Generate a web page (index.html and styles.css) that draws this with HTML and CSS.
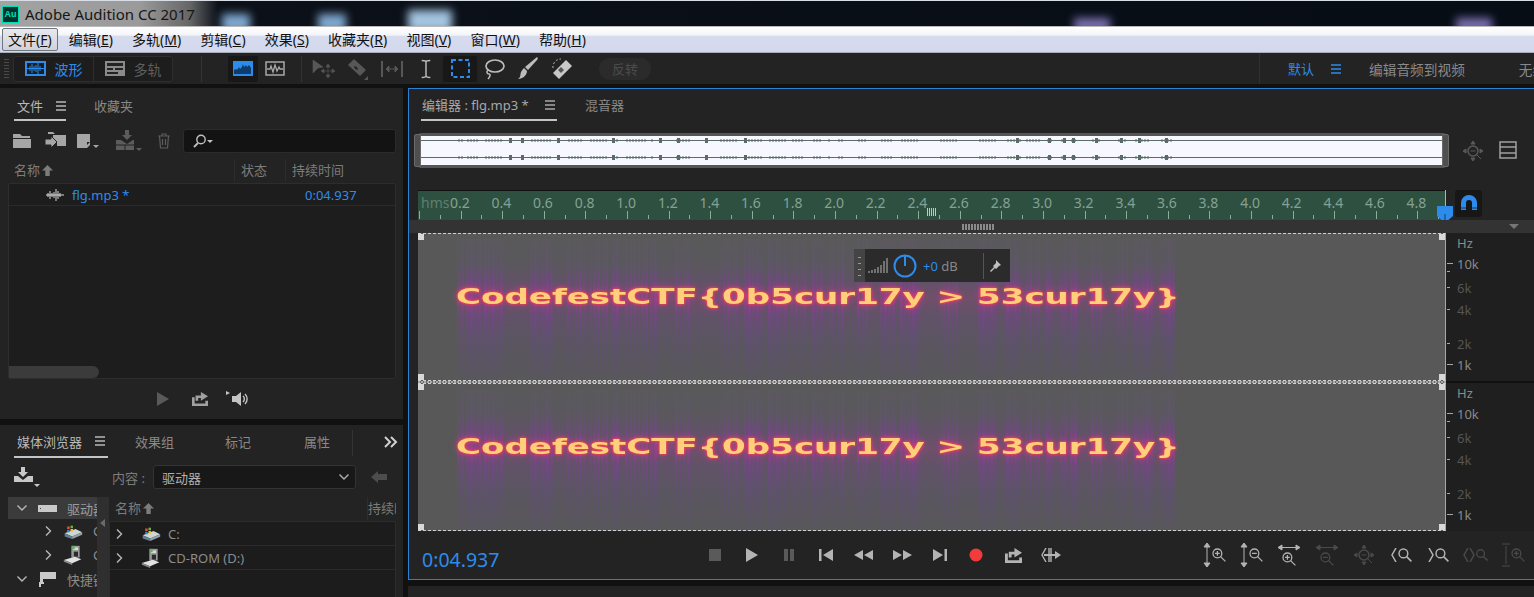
FILE: index.html
```html
<!DOCTYPE html>
<html lang="zh-CN">

<head>
    <meta charset="UTF-8">
    <title>Adobe Audition CC 2017</title>
    <link rel="stylesheet" href="styles.css">
</head>

<body>
    <svg class="defs" width="0" height="0">
        <symbol id="i-menu" viewBox="0 0 12 10"><path d="M1 1h10M1 5h10M1 9h10" stroke="currentColor" stroke-width="1.3" fill="none"/></symbol>
        <symbol id="i-right" viewBox="0 0 10 12"><path d="M3 1.500 7.500 6 3 10.500" stroke="currentColor" stroke-width="1.4" fill="none"/></symbol>
        <symbol id="i-down" viewBox="0 0 12 10"><path d="M1.500 2.500 6 7l4.500-4.500" stroke="currentColor" stroke-width="1.4" fill="none"/></symbol>
        <symbol id="i-sort" viewBox="0 0 10 10"><path d="M5 0 10 5H7v5H3V5H0z" fill="currentColor"/></symbol>
        <symbol id="i-loop" viewBox="0 0 20 18"><path d="M1 7h3v7h12v-3h3v6H1z" fill="currentColor"/><path d="M5 11V5h6V1l8 5-8 5V8H8v3z" fill="currentColor"/></symbol>
        <symbol id="i-drive" viewBox="0 0 24 20"><path d="M2 12 15 7l8 4-12 5z" fill="#cfd6cf"/><path d="M2 12l9 4v3l-9-3z" fill="#5d7f93"/><path d="M11 16l12-5v3l-12 5z" fill="#8fa2ad"/><path d="M5 4h3v3H5z" fill="#e0552f"/><path d="M9 3h3v3H9z" fill="#63b446"/><path d="M5 8h3v3H5z" fill="#3d86d8"/><path d="M9 7h3v3H9z" fill="#eebd33"/></symbol>
        <symbol id="i-cd" viewBox="0 0 24 24"><path d="M10 1h10v14H10z" fill="#9a9a9a"/><path d="M12 3h6v3h-6z" fill="#d8d8d8"/><path d="M11 1h3v4h-3z" fill="#5fb05f"/><path d="M13 8h5v6h-5z" fill="#2b2b2b"/><path d="M1 18l13-4 8 3-11 5z" fill="#e2e2e2"/><path d="M1 18l10 4v2L1 20z" fill="#8b8b8b"/></symbol>
        <symbol id="i-plus" viewBox="0 0 20 20"><circle cx="8" cy="8" r="5.500" stroke="currentColor" stroke-width="1.600" fill="none"/><path d="M12 12l6 6M5 8h6M8 5v6" stroke="currentColor" stroke-width="1.600" fill="none"/></symbol>
        <symbol id="i-minus" viewBox="0 0 20 20"><circle cx="8" cy="8" r="5.500" stroke="currentColor" stroke-width="1.600" fill="none"/><path d="M12 12l6 6M5 8h6" stroke="currentColor" stroke-width="1.600" fill="none"/></symbol>
        <symbol id="i-glass" viewBox="0 0 20 20"><circle cx="8" cy="8" r="5.500" stroke="currentColor" stroke-width="1.800" fill="none"/><path d="M12 12l6 6" stroke="currentColor" stroke-width="2" fill="none"/></symbol>
    </svg>

    <div class="app">
        <header class="titlebar">
            <span class="logo">Au</span>
            <span class="title">Adobe Audition CC 2017</span>
            <i class="blur-icon b1"></i>
            <i class="blur-icon b2"></i>
            <i class="blur-icon b3"></i>
            <i class="blur-icon b4"></i>
            <i class="blur-icon b5"></i>
        </header>

        <nav class="menubar">
            <a class="menu-item active">文件(<u>F</u>)</a>
            <a class="menu-item">编辑(<u>E</u>)</a>
            <a class="menu-item">多轨(<u>M</u>)</a>
            <a class="menu-item">剪辑(<u>C</u>)</a>
            <a class="menu-item">效果(<u>S</u>)</a>
            <a class="menu-item">收藏夹(<u>R</u>)</a>
            <a class="menu-item">视图(<u>V</u>)</a>
            <a class="menu-item">窗口(<u>W</u>)</a>
            <a class="menu-item">帮助(<u>H</u>)</a>
        </nav>

        <div class="toolbar">
            <span class="grip"></span>
            <div class="mode-group">
                <button class="mode on">
                    <svg width="21" height="15" viewBox="0 0 21 15"><path d="M1 1h19v13H1z" fill="none" stroke="currentColor" stroke-width="2"/><path d="M2 7.500h17M5 5v5M7 3v9M9 5v5M11 4v7M13 2v11M15 5v5" stroke="currentColor" fill="none"/></svg>
                    波形
                </button>
                <button class="mode">
                    <svg width="20" height="15" viewBox="0 0 20 15"><path d="M0 0h20v15H0z" fill="#8a8a8a"/><path d="M2 2h16v3H2zM2 7h6v2H2zM10 7h8v2h-8zM2 11h11v2H2z" fill="#232323"/></svg>
                    多轨
                </button>
            </div>
            <span class="tb-sep first"></span>
            <div class="view-group">
                <button class="view on">
                    <svg width="20" height="15" viewBox="0 0 20 15"><path d="M0 0h20v15H0z" fill="#2d8ceb"/><path d="M1 13V9l2-1 1 1 2-3 1 2 2-2 1-3 1 3 2-2 1 2 2-2 2 3v6z" fill="#0e3c6c"/></svg>
                </button>
                <button class="view">
                    <svg width="20" height="15" viewBox="0 0 20 15"><path d="M1 1h18v13H1z" fill="none" stroke="#a8a8a8" stroke-width="1.500"/><path d="M2 8h3l1-3 2 6 2-7 2 6 2-4 1 2h3" fill="none" stroke="#a8a8a8" stroke-width="1.300"/></svg>
                </button>
            </div>
            <span class="tb-sep second"></span>
            <div class="tools">
                <button class="tool off"><svg width="24" height="20" viewBox="0 0 24 20"><path d="M1 1l10 7-5 1-5 5zM16 7v10M11 12h10M16 5l-2 3h4zM16 19l-2-3h4zM9 12l3-2v4zM23 12l-3-2v4z" fill="currentColor" stroke="currentColor" stroke-width=".6"/></svg></button>
                <button class="tool off"><svg width="22" height="22" viewBox="0 0 22 22"><path d="M7 1l12 11-6 6L1 7z" fill="currentColor"/><path d="M7 8l3 1 1 3-3-1z" fill="#232323"/><path d="M21 18v4h-4z" fill="currentColor"/></svg></button>
                <button class="tool off"><svg width="24" height="18" viewBox="0 0 24 18"><path d="M2 1v16M22 1v16" stroke="currentColor" stroke-width="2"/><path d="M6 9h12M6 9l3-3v6zM18 9l-3-3v6z" stroke="currentColor" fill="currentColor"/></svg></button>
                <button class="tool"><svg width="12" height="20" viewBox="0 0 14 22"><path d="M2 1c3 0 5 1 5 2 0-1 2-2 5-2M7 3v16M2 21c3 0 5-1 5-2 0 1 2 2 5 2" fill="none" stroke="currentColor" stroke-width="1.700"/></svg></button>
                <button class="tool selected"><svg width="19" height="19" viewBox="0 0 19 19"><path d="M1 1h17v17H1z" fill="none" stroke="#2d8ceb" stroke-width="2" stroke-dasharray="4 2.500"/></svg></button>
                <button class="tool"><svg width="22" height="22" viewBox="0 0 22 22"><ellipse cx="12" cy="8" rx="9" ry="6" fill="none" stroke="currentColor" stroke-width="1.700"/><path d="M5 12c-2 2-1 4 1 4s1 3-1 5" fill="none" stroke="currentColor" stroke-width="1.500"/></svg></button>
                <button class="tool"><svg width="22" height="23" viewBox="0 0 22 23"><path d="M20 0c1 1 1 2 0 3l-9 10-3-3z" fill="currentColor"/><path d="M7 11l3 3c0 4-4 8-9 8 3-2 2-4 3-7 1-2 2-3 3-4z" fill="currentColor"/></svg></button>
                <button class="tool"><svg width="24" height="23" viewBox="0 0 24 23"><path d="M16 3l6 6L9 22l-6-6z" fill="#c8c8c8"/><path d="M11 10l3 3-3 3-3-3z" fill="#555"/><path d="M3 11A8 8 0 0 1 11 2" fill="none" stroke="#bbb" stroke-dasharray="2 2"/></svg></button>
            </div>
            <button class="pill">反转</button>
            <div class="workspaces">
                <span class="ws on">默认</span>
                <svg class="ws-menu" width="12" height="10"><use href="#i-menu"/></svg>
                <span class="ws edit">编辑音频到视频</span>
                <span class="ws none">无线电作品</span>
            </div>
        </div>

        <div class="workspace">
            <aside class="left">
                <section class="panel files">
                    <div class="tabs">
                        <div class="tab on">文件<svg width="12" height="10"><use href="#i-menu"/></svg></div>
                        <div class="tab fav">收藏夹</div>
                    </div>
                    <div class="file-tools">
                        <svg width="20" height="16" viewBox="0 0 20 16"><path d="M1 1h7l2 2h8v2H1zM1 6h18v9H1z" fill="#a6a6a6"/></svg>
                        <svg width="22" height="18" viewBox="0 0 22 18"><path d="M3 0h5l2 2H3zM8 3h13v11H12V9H8z" fill="#a6a6a6"/><path d="M0 7h6V4l6 6-6 6v-3H0z" fill="#a6a6a6" stroke="#232323"/></svg>
                        <svg width="24" height="18" viewBox="0 0 24 18"><path d="M1 2h13v11l-3 3H1z" fill="#a6a6a6"/><path d="M11 10h3l-3 3z" fill="#232323"/><path d="M17 13h6l-3 3z" fill="#a6a6a6"/></svg>
                        <svg class="dim" width="27" height="22" viewBox="0 0 27 22"><path d="M10 0h4v5h3l-5 5-5-5h3z" fill="#5c5c5c"/><path d="M1 10h5l6 4 6-4h1v10H1z" fill="#5c5c5c"/><path d="M1 15h18M10 15v5" stroke="#232323"/><path d="M21 18h6l-3 3z" fill="#5c5c5c"/></svg>
                        <svg class="dim trash" width="14" height="16" viewBox="0 0 14 16"><path d="M1 3h12M5 3V1h4v2M2.500 3l1 12h7l1-12M5.500 6v6M8.500 6v6" fill="none" stroke="#5c5c5c" stroke-width="1.200"/></svg>
                        <div class="search">
                            <svg width="22" height="14" viewBox="0 0 22 14"><circle cx="9" cy="5.500" r="4.200" fill="none" stroke="#c0c0c0" stroke-width="1.400"/><path d="M6 9l-4 4" stroke="#c0c0c0" stroke-width="1.800"/><path d="M15 6h6l-3 3z" fill="#c0c0c0"/></svg>
                        </div>
                    </div>
                    <div class="col-head">
                        <span class="c-name">名称<svg width="11" height="11"><use href="#i-sort"/></svg></span>
                        <span class="c-state">状态</span>
                        <span class="c-time">持续时间</span>
                    </div>
                    <div class="file-list">
                        <div class="file-row">
                            <svg width="18" height="12" viewBox="0 0 18 12"><path d="M0 6h18M2 4v4M4 2v8M6 4v4M8 3v6M10 0v12M12 2v8M14 4v4" stroke="#d8d8d8" fill="none"/></svg>
                            <span class="file-name">flg.mp3 *</span>
                            <span class="file-time">0:04.937</span>
                        </div>
                        <div class="scroll"><div class="thumb"></div></div>
                    </div>
                    <div class="file-foot">
                        <svg class="dim" width="12" height="14" viewBox="0 0 12 14"><path d="M0 0l12 7-12 7z" fill="#5a5a5a"/></svg>
                        <svg width="18" height="16"><use href="#i-loop"/></svg>
                        <svg class="speaker" width="26" height="18" viewBox="0 0 26 18"><path d="M1 1l4 2-4 2zM7 6h4l5-4v14l-5-4H7z" fill="#c4c4c4"/><path d="M18 6a4 4 0 0 1 0 6M20 4a7 7 0 0 1 0 10" fill="none" stroke="#c4c4c4" stroke-width="1.400"/></svg>
                    </div>
                </section>

                <section class="panel media">
                    <div class="tabs media-tabs">
                        <div class="tab on">媒体浏览器<svg width="12" height="10"><use href="#i-menu"/></svg></div>
                        <div class="tab t-group">效果组</div>
                        <div class="tab t-mark">标记</div>
                        <div class="tab t-prop">属性</div>
                        <span class="tab-sep"></span>
                        <svg class="more" width="14" height="12" viewBox="0 0 14 12"><path d="M1 1l5 5-5 5M7 1l5 5-5 5" fill="none" stroke="#d0d0d0" stroke-width="2"/></svg>
                    </div>
                    <div class="media-bar">
                        <svg class="import" width="27" height="20" viewBox="0 0 27 20"><path d="M8 0h4v5h3l-5 5-5-5h3z" fill="#c8c8c8"/><path d="M1 9h4l5 4 5-4h5v6H1z" fill="#c8c8c8"/><path d="M21 17h6l-3 3z" fill="#c8c8c8"/></svg>
                        <label class="content-label">内容 :</label>
                        <div class="select">驱动器<svg width="12" height="10"><use href="#i-down"/></svg></div>
                        <svg class="back" width="16" height="12" viewBox="0 0 16 12"><path d="M0 6l7-6v3h9v6H7v3z" fill="#4d4d4d"/></svg>
                    </div>
                    <div class="browser">
                        <div class="tree">
                            <div class="tree-row sel"><svg class="chev" width="12" height="10"><use href="#i-down"/></svg><svg width="19" height="9" viewBox="0 0 19 9"><path d="M0 1h19v7H0z" fill="#c9c9c9"/><path d="M2 4h1v1H2z" fill="#444"/></svg><span>驱动器</span></div>
                            <div class="tree-row sub"><svg class="chev" width="10" height="12"><use href="#i-right"/></svg><svg width="20" height="17"><use href="#i-drive"/></svg><span>C:</span></div>
                            <div class="tree-row sub"><svg class="chev" width="10" height="12"><use href="#i-right"/></svg><svg width="20" height="20"><use href="#i-cd"/></svg><span>CD-ROM (D:)</span></div>
                            <div class="tree-row"><svg class="chev" width="12" height="10"><use href="#i-down"/></svg><svg width="19" height="16" viewBox="0 0 19 16"><path d="M2 1h16v7H5v3H2z" fill="#c9c9c9"/><path d="M1 11h5v2H3v3H1z" fill="#c9c9c9"/></svg><span>快捷键</span></div>
                        </div>
                        <div class="splitter"><i></i></div>
                        <div class="listing">
                            <div class="col-head listing-head">
                                <span class="c-name">名称<svg width="11" height="11"><use href="#i-sort"/></svg></span>
                                <span class="c-last">持续时间</span>
                            </div>
                            <div class="listing-box">
                                <div class="list-row"><svg class="chev" width="10" height="12"><use href="#i-right"/></svg><svg width="20" height="17"><use href="#i-drive"/></svg><span>C:</span></div>
                                <div class="list-row"><svg class="chev" width="10" height="12"><use href="#i-right"/></svg><svg width="20" height="20"><use href="#i-cd"/></svg><span>CD-ROM (D:)</span></div>
                            </div>
                        </div>
                    </div>
                </section>
            </aside>

            <div class="right">
                <main class="editor">
                    <div class="tabs editor-tabs">
                        <div class="tab on">编辑器 : flg.mp3 *<svg width="12" height="10"><use href="#i-menu"/></svg></div>
                        <div class="tab mixer">混音器</div>
                    </div>

                    <div class="overview-row">
                        <div class="overview"><svg id="overview" width="1022" height="30"></svg></div>
                        <i class="ov-grip l"></i>
                        <i class="ov-grip r"></i>
                        <svg class="ov-zoom" width="22" height="22" viewBox="0 0 22 22"><circle cx="11" cy="11" r="5" fill="none" stroke="#5a5a5a" stroke-width="1.500"/><path d="M14 14l5 5M8.500 11h5M11 1l-2 3h4zM1 11l3-2v4zM21 11l-3-2v4zM11 21l-2-3h4z" stroke="#5a5a5a" fill="#5a5a5a"/></svg>
                        <svg class="ov-list" width="18" height="18" viewBox="0 0 18 18"><path d="M1 1h16v16H1zM1 6h16M1 12h16" fill="none" stroke="#a0a0a0" stroke-width="1.500"/></svg>
                    </div>

                    <div class="ruler-row">
                        <div class="ruler">
                            <span class="hms">hms</span>
                            <span>0.2</span><span>0.4</span><span>0.6</span><span>0.8</span><span>1.0</span><span>1.2</span>
                            <span>1.4</span><span>1.6</span><span>1.8</span><span>2.0</span><span>2.2</span><span>2.4</span>
                            <span>2.6</span><span>2.8</span><span>3.0</span><span>3.2</span><span>3.4</span><span>3.6</span>
                            <span>3.8</span><span>4.0</span><span>4.2</span><span>4.4</span><span>4.6</span><span>4.8</span>
                            <i class="ruler-grip"></i>
                            <svg class="playhead" width="16" height="16" viewBox="0 0 16 16"><path d="M0 0h16v10l-7 6h-2l-7-6z" fill="#2d8ceb"/><path d="M8 8v8" stroke="#0d3f70"/></svg>
                        </div>
                        <button class="snap">
                            <svg width="18" height="18" viewBox="0 0 18 18"><path d="M1 15V8a8 8 0 0 1 16 0v7h-5V8a3 3 0 0 0-6 0v7z" fill="#2d8ceb"/><path d="M1 13h5M12 13h5" stroke="#0c3a66" stroke-width="1.200"/></svg>
                        </button>
                    </div>

                    <div class="hscroll"><i class="hs-grip"></i><i class="hs-arrow"></i></div>

                    <div class="channels">
                        <div class="channel">
                            <div class="spec" data-spec>
                                <div class="flag">CodefestCTF{0b5cur17y &gt; 53cur17y}</div>
                                <i class="handle tl"></i><i class="handle tr"></i><i class="handle bl"></i><i class="handle br"></i>
                            </div>
                            <div class="freq">
                                <span class="f hz">Hz</span><span class="f k10">10k</span><span class="f k6 low">6k</span><span class="f k4 low">4k</span><span class="f k2 low">2k</span><span class="f k1">1k</span><span class="f k0">100</span>
                                <i class="t t1"></i><i class="t t2"></i><i class="t t3"></i><i class="t t4"></i><i class="t t5"></i><i class="t t6"></i>
                            </div>
                        </div>
                        <div class="divider"></div>
                        <div class="channel">
                            <div class="spec" data-spec>
                                <div class="flag">CodefestCTF{0b5cur17y &gt; 53cur17y}</div>
                                <i class="handle tl"></i><i class="handle tr"></i><i class="handle bl"></i><i class="handle br"></i>
                            </div>
                            <div class="freq">
                                <span class="f hz">Hz</span><span class="f k10">10k</span><span class="f k6 low">6k</span><span class="f k4 low">4k</span><span class="f k2 low">2k</span><span class="f k1">1k</span><span class="f k0">100</span>
                                <i class="t t1"></i><i class="t t2"></i><i class="t t3"></i><i class="t t4"></i><i class="t t5"></i><i class="t t6"></i>
                            </div>
                        </div>
                        <div class="hud">
                            <span class="hud-grip"></span>
                            <svg width="20" height="16" viewBox="0 0 20 16"><path d="M1 15v-2M4 15v-3M7 15v-4M10 15v-6M13 15v-8M16 15V3M19 15V0" stroke="#a0a0a0" fill="none" stroke-width="1.200"/></svg>
                            <svg width="24" height="24" viewBox="0 0 24 24"><circle cx="12" cy="12" r="10.500" fill="none" stroke="#2d8ceb" stroke-width="2"/><path d="M12 1v11" stroke="#2d8ceb" stroke-width="2"/></svg>
                            <span class="hud-db"><b>+0</b> dB</span>
                            <span class="hud-sep"></span>
                            <svg width="12" height="12" viewBox="0 0 12 12"><path d="M7 0l5 5-2 1-3 3-1-1-4 4-1-1 4-4-1-1 3-3z" fill="#c0c0c0"/></svg>
                        </div>
                    </div>

                    <div class="transport">
                        <div class="clock">0:04.937</div>
                        <div class="transport-btns">
                            <svg width="12" height="12" viewBox="0 0 12 12"><path d="M0 0h12v12H0z" fill="#5a5a5a"/></svg>
                            <svg width="14" height="14" viewBox="0 0 14 14"><path d="M1 0l12 7-12 7z" fill="#b4b4b4"/></svg>
                            <svg width="12" height="12" viewBox="0 0 12 12"><path d="M1 0h4v12H1zM7 0h4v12H7z" fill="#5a5a5a"/></svg>
                            <svg width="15" height="12" viewBox="0 0 15 12"><path d="M0 0h2.500v12H0zM14 0v12L4 6z" fill="#b4b4b4"/></svg>
                            <svg width="20" height="10" viewBox="0 0 20 10"><path d="M9 0v10L0 5zM19 0v10l-9-5z" fill="#b4b4b4"/></svg>
                            <svg width="20" height="10" viewBox="0 0 20 10"><path d="M1 0v10l9-5zM11 0v10l9-5z" fill="#b4b4b4"/></svg>
                            <svg width="15" height="12" viewBox="0 0 15 12"><path d="M1 0v12l10-6zM12.500 0H15v12h-2.500z" fill="#b4b4b4"/></svg>
                            <svg width="14" height="14" viewBox="0 0 14 14"><circle cx="7" cy="7" r="6.500" fill="#f23b3b"/></svg>
                            <svg class="t-loop" width="19" height="17"><use href="#i-loop"/></svg>
                            <svg width="20" height="14" viewBox="0 0 20 14"><path d="M5 0 1 7l4 7M8 0v14M10 0v14" fill="none" stroke="#b4b4b4" stroke-width="1.400"/><path d="M3 6h11V3l6 4-6 4V8H3z" fill="#b4b4b4"/></svg>
                        </div>
                        <div class="zoom-btns">
                            <span class="zb"><svg width="8" height="24" viewBox="0 0 8 24"><path d="M4 3v18M4 0 1 4h6zM4 24l-3-4h6z" stroke="currentColor" fill="currentColor"/></svg><svg width="16" height="16"><use href="#i-plus"/></svg></span>
                            <span class="zb"><svg width="8" height="24" viewBox="0 0 8 24"><path d="M4 3v18M4 0 1 4h6zM4 24l-3-4h6z" stroke="currentColor" fill="currentColor"/></svg><svg width="16" height="16"><use href="#i-minus"/></svg></span>
                            <span class="zb col"><svg width="22" height="7" viewBox="0 0 22 7"><path d="M3 3.500h16M0 3.500 4 1v5zM22 3.500 18 1v5z" stroke="currentColor" fill="currentColor"/></svg><svg width="16" height="16"><use href="#i-plus"/></svg></span>
                            <span class="zb col dim"><svg width="22" height="7" viewBox="0 0 22 7"><path d="M3 3.500h16M0 3.500 4 1v5zM22 3.500 18 1v5z" stroke="currentColor" fill="currentColor"/></svg><svg width="16" height="16"><use href="#i-minus"/></svg></span>
                            <span class="zb dim"><svg width="22" height="22" viewBox="0 0 22 22"><circle cx="11" cy="11" r="5" fill="none" stroke="currentColor" stroke-width="1.500"/><path d="M14 14l5 5M8.500 11h5M11 1l-2 3h4zM1 11l3-2v4zM21 11l-3-2v4zM11 21l-2-3h4z" stroke="currentColor" fill="currentColor"/></svg></span>
                            <span class="zb"><svg width="6" height="14" viewBox="0 0 6 14"><path d="M5 0 1 7l4 7" fill="none" stroke="currentColor" stroke-width="1.500"/></svg><svg width="16" height="16"><use href="#i-glass"/></svg></span>
                            <span class="zb"><svg width="6" height="14" viewBox="0 0 6 14"><path d="M1 0l4 7-4 7" fill="none" stroke="currentColor" stroke-width="1.500"/></svg><svg width="16" height="16"><use href="#i-glass"/></svg></span>
                            <span class="zb dim"><svg width="12" height="14" viewBox="0 0 12 14"><path d="M5 0 1 7l4 7M7 0l4 7-4 7" fill="none" stroke="currentColor" stroke-width="1.500"/></svg><svg width="14" height="14"><use href="#i-glass"/></svg></span>
                            <span class="zb dim"><svg width="8" height="24" viewBox="0 0 8 24"><path d="M4 3v18M0 1h8M0 23h8" stroke="currentColor" fill="none"/></svg><svg width="16" height="16"><use href="#i-plus"/></svg></span>
                        </div>
                    </div>
                </main>
                <div class="status"></div>
            </div>
        </div>
    </div>

    <script src="script.js"></script>
</body>

</html>
```

FILE: styles.css
```css
* {
    box-sizing: border-box;
}

html, body {
    margin: 0;
    height: 100%;
    overflow: hidden;
    background-color: #111;
}

body {
    font-family: "Noto Sans", "Noto Sans CJK SC", sans-serif;
    font-size: 13px;
    color: #a0a0a0;
}

button {
    font: inherit;
    color: inherit;
    background: none;
    border: none;
    padding: 0;
}

svg {
    display: block;
    flex: none;
}

.defs {
    position: absolute;
}

.app {
    width: 1534px;
    height: 597px;
    display: flex;
    flex-direction: column;
    overflow: hidden;
}

/* barra de titulo */
.titlebar {
    position: relative;
    flex: none;
    height: 27px;
    display: flex;
    align-items: center;
    padding: 1px 0 0 2px;
    background: linear-gradient(90deg, #a3a3a3 0, #9a9a9a 140px, #666 190px, #0c1119 218px, #070d15 100%);
    border-top: 1px solid #d8dde6;
    border-bottom: 1px solid #b9b9b9;
    overflow: hidden;
}

.logo {
    width: 17px;
    height: 17px;
    border: 1px solid #00dcb4;
    background-color: #00332d;
    color: #00e0b8;
    font: bold 9px "Liberation Sans", sans-serif;
    line-height: 15px;
    text-align: center;
}

.title {
    margin-left: 6px;
    font-size: 15px;
    color: #161616;
}

.blur-icon {
    position: absolute;
    bottom: -6px;
    width: 28px;
    height: 18px;
    background-color: #7fa8cf;
    filter: blur(4px);
}

.b1 { left: 222px; }
.b2 { left: 318px; }
.b3 { left: 408px; width: 44px; background-color: #a3c3e0; height: 22px; }
.b4 { left: 1074px; width: 36px; background-color: #7a6fb0; height: 14px; }
.b5 { left: 1456px; width: 36px; background-color: #7a6fb0; height: 14px; }

/* menu */
.menubar {
    flex: none;
    height: 26px;
    display: flex;
    align-items: center;
    padding: 0 2px;
    background: linear-gradient(#fff 0, #f4f5f9 32%, #d6dbee 38%, #d3d8ec 100%);
    border-bottom: 1px solid #a9aebb;
}

.menu-item {
    padding: 0 7px;
    margin-right: 3.200px;
    height: 23px;
    line-height: 22px;
    font-size: 14px;
    color: #111;
    white-space: nowrap;
    border: 1px solid transparent;
}

.menu-item.active {
    padding: 0 5px;
    border: 1px solid #6e7680;
    border-radius: 2px;
    background: linear-gradient(#e8e9ee, #d0d2da);
    margin-right: 3px;
}

/* barra de ferramentas */
.toolbar {
    flex: none;
    height: 31px;
    display: flex;
    align-items: center;
    background-color: #232323;
}

.grip {
    width: 5px;
    height: 20px;
    margin-left: 4px;
    background: repeating-linear-gradient(#4a4a4a 0 1px, transparent 1px 3px);
}

.mode-group {
    display: flex;
    margin-left: 4px;
    height: 26px;
    border: 1px solid #2e2e2e;
    border-radius: 3px;
    background-color: #1d1d1d;
}

.mode {
    width: 79px;
    display: flex;
    align-items: center;
    justify-content: center;
    gap: 9px;
    color: #5e5e5e;
    border-left: 1px solid #2e2e2e;
    font-size: 14px;
}

.mode.on {
    color: #2d8ceb;
    border-left: none;
}

.tb-sep {
    width: 1px;
    height: 26px;
    background-color: #333;
}

.tb-sep.first {
    margin: 0 26px 0 28px;
}

.tb-sep.second {
    margin: 0 5px 0 11px;
}

.view-group {
    display: flex;
    gap: 2px;
}

.view {
    width: 30px;
    height: 26px;
    display: flex;
    align-items: center;
    justify-content: center;
    border-radius: 2px;
}

.view.on {
    background-color: #181818;
}

.tools {
    display: flex;
}

.tool {
    width: 34px;
    height: 26px;
    display: flex;
    align-items: center;
    justify-content: center;
    color: #bcbcbc;
    border-radius: 2px;
}

.tool.off {
    color: #575757;
}

.tool.selected {
    background-color: #181818;
}

.pill {
    margin-left: 20px;
    width: 52px;
    height: 22px;
    border-radius: 11px;
    background-color: #2b2b2b;
    color: #4c4c4c;
    font-size: 13px;
}

.workspaces {
    margin-left: auto;
    width: 275px;
    height: 31px;
    display: flex;
    align-items: center;
    border-left: 1px solid #303030;
    font-size: 13px;
    overflow: hidden;
    white-space: nowrap;
}

.ws.on {
    margin-left: 28px;
    color: #2d8ceb;
}

.ws-menu {
    margin-left: 16px;
    color: #2d8ceb;
}

.ws.edit {
    margin-left: 27px;
    font-size: 13.700px;
    color: #8a8a8a;
}

.ws.none {
    margin-left: 54px;
    font-size: 13.700px;
    color: #8a8a8a;
}

/* paineis */
.workspace {
    flex: 1;
    min-height: 0;
    display: flex;
    padding-top: 4px;
    background-color: #111;
}

.left {
    width: 403px;
    flex: none;
    display: flex;
    flex-direction: column;
    gap: 6px;
}

.panel {
    background-color: #232323;
}

.files {
    height: 331px;
    padding-left: 8px;
    padding-right: 7px;
    position: relative;
}

.media {
    flex: 1;
    min-height: 0;
    padding-left: 8px;
    overflow: hidden;
}

.tabs {
    display: flex;
    align-items: flex-start;
    font-size: 13px;
    color: #888;
}

.tab {
    white-space: nowrap;
}

.tab.on {
    display: flex;
    align-items: center;
    gap: 12px;
    color: #b8b8b8;
    border-bottom: 2px solid #c4c4c4;
}

.files .tabs {
    height: 34px;
    padding: 7px 0 0 6px;
}

.files .tab.on {
    width: 52px;
    height: 26px;
    padding-left: 3px;
    padding-bottom: 3px;
}

.fav {
    margin-left: 28px;
    line-height: 23px;
}

.file-tools {
    height: 37px;
    display: flex;
    align-items: center;
    padding-left: 4px;
    color: #a6a6a6;
}

.file-tools svg:nth-child(2) {
    margin-left: 13px;
}

.file-tools svg:nth-child(3) {
    margin-left: 9px;
}

.file-tools svg:nth-child(4) {
    margin-left: 15px;
}

.file-tools .trash {
    margin-left: 15px;
}

.search {
    margin-left: 12px;
    width: 213px;
    height: 24px;
    display: flex;
    align-items: center;
    padding-left: 8px;
    background-color: #131313;
    border: 1px solid #2b2b2b;
    border-radius: 3px;
}

.col-head {
    position: relative;
    height: 24px;
    line-height: 23px;
    font-size: 13px;
    color: #7c7c7c;
}

.col-head span {
    position: absolute;
    top: 0;
}

.c-name {
    left: 6px;
    display: flex;
    align-items: center;
    gap: 2px;
}

.c-state {
    left: 226px;
    padding-left: 6px;
    border-left: 1px solid #2c2c2c;
}

.c-time {
    left: 277px;
    padding-left: 6px;
    border-left: 1px solid #2c2c2c;
}

.file-list {
    position: relative;
    width: 388px;
    height: 196px;
    background-color: #1d1d1d;
    border: 1px solid #2d2d2d;
    border-radius: 2px;
    overflow: hidden;
}

.file-row {
    position: relative;
    height: 22px;
    display: flex;
    align-items: center;
    padding-left: 37px;
    border-bottom: 1px solid #2a2a2a;
}

.file-name {
    margin-left: 8px;
    color: #2d8ceb;
}

.file-time {
    position: absolute;
    left: 296px;
    color: #2d8ceb;
}

.scroll {
    position: absolute;
    left: 0;
    right: 0;
    bottom: 0;
    height: 12px;
}

.thumb {
    width: 90px;
    height: 100%;
    border-radius: 0 6px 6px 0;
    background-color: #3b3b3b;
}

.file-foot {
    display: flex;
    align-items: center;
    padding: 11px 0 0 149px;
    gap: 22px;
}

.speaker {
    margin-left: -6px;
}

.media-tabs {
    position: relative;
    height: 33px;
    padding: 7px 0 0 6px;
}

.media-tabs .tab.on {
    width: 94px;
    height: 26px;
    padding-left: 3px;
    gap: 12px;
    align-items: flex-start;
}

.media-tabs .tab.on svg {
    margin-top: 4px;
}

.t-group {
    margin-left: 27px;
}

.t-mark {
    margin-left: 51px;
}

.t-prop {
    margin-left: 53px;
}

.tab-sep {
    position: absolute;
    left: 344px;
    top: 5px;
    width: 1px;
    height: 26px;
    background-color: #333;
}

.more {
    position: absolute;
    left: 376px;
    top: 11px;
}

.media-bar {
    height: 33px;
    display: flex;
    align-items: center;
    padding-top: 5px;
}

.import {
    margin-left: 5px;
}

.content-label {
    margin-left: 72px;
    color: #7c7c7c;
}

.select {
    margin-left: 8px;
    width: 203px;
    height: 24px;
    display: flex;
    align-items: center;
    justify-content: space-between;
    padding: 0 5px 0 8px;
    background-color: #181818;
    border: 1px solid #333;
    border-radius: 3px;
    color: #b0b0b0;
}

.back {
    margin-left: 15px;
}

.browser {
    display: flex;
    margin-top: 6px;
}

.tree {
    width: 89px;
    flex: none;
    overflow: hidden;
}

.tree-row {
    height: 24px;
    display: flex;
    align-items: center;
    gap: 10px;
    padding-left: 8px;
    white-space: nowrap;
    color: #8c8c8c;
}

.tree-row.sel {
    height: 22px;
    background-color: #3b3b3b;
    color: #9c9c9c;
}

.tree-row.sub {
    padding-left: 35px;
    gap: 10px;
}

.chev {
    color: #b8b8b8;
}

.splitter {
    position: relative;
    width: 12px;
    flex: none;
    height: 200px;
    background-color: #2f2f2f;
}

.splitter i {
    position: absolute;
    top: 22px;
    left: 3px;
    border: 4px solid transparent;
    border-left: none;
    border-right: 5px solid #6a6a6a;
}

.listing {
    width: 287px;
    flex: none;
}

.listing-head {
    height: 24px;
}

.listing-head .c-last {
    left: 258px;
    width: 29px;
    overflow: hidden;
    white-space: nowrap;
    border-left: 1px solid #2e2e2e;
}

.listing-box {
    height: 120px;
    background-color: #1c1c1c;
    border: 1px solid #2d2d2d;
    border-radius: 2px;
}

.list-row {
    height: 24px;
    display: flex;
    align-items: center;
    padding-left: 4px;
    border-bottom: 1px solid #2b2b2b;
    color: #8c8c8c;
}

.list-row svg + svg {
    margin-left: 17px;
}

.list-row span {
    margin-left: 7px;
}

/* editor */
.right {
    margin-left: 5px;
    flex: 1;
    min-width: 0;
    display: flex;
    flex-direction: column;
}

.editor {
    height: 492px;
    flex: none;
    background-color: #232323;
    border: 1px solid #2d7fd6;
    border-right: none;
    padding-left: 9px;
}

.editor-tabs {
    height: 40px;
    padding: 5px 0 0 3px;
}

.editor-tabs .tab.on {
    width: 136px;
    height: 27px;
    padding-left: 1px;
    padding-bottom: 4px;
    gap: 15px;
    color: #a8a8a8;
}

.mixer {
    margin-left: 28px;
    line-height: 23px;
}

.overview-row {
    position: relative;
    height: 61px;
    display: flex;
    align-items: flex-start;
    padding-top: 4px;
}

.overview {
    width: 1028px;
    height: 35px;
    background-color: #f6f7ff;
    border: 3px solid #555;
    border-radius: 3px;
    overflow: hidden;
}

.ov-grip {
    position: absolute;
    top: 5px;
    width: 7px;
    height: 33px;
    background-color: #4f4f4f;
    border: 1px solid #6a6a6a;
    border-radius: 2px;
}

.ov-grip.l { left: -4px; }
.ov-grip.r { left: 1024px; }

.ov-zoom {
    margin: 7px 0 0 16px;
}

.ov-list {
    margin: 8px 0 0 15px;
}

.ruler-row {
    height: 30px;
    display: flex;
}

.ruler {
    position: relative;
    width: 1028px;
    height: 30px;
    display: flex;
    padding-left: 21px;
    background-color: #2e5040;
    background-image:
        repeating-linear-gradient(90deg, #8eac9c 0 1px, transparent 1px 41.600px),
        repeating-linear-gradient(90deg, #8eac9c 0 1px, transparent 1px 20.800px),
        linear-gradient(#111 0 1px, transparent 1px);
    background-size: 100% 8px, 100% 4px, 100% 100%;
    background-position: 0.800px 21px, 0.800px 25px, 0 0;
    background-repeat: no-repeat;
    border-right: 1px solid #a8b8b0;
    font-size: 14px;
    color: #84a294;
    line-height: 26px;
}

.ruler span {
    width: 41.600px;
    flex: none;
    text-align: center;
}

.ruler .hms {
    position: absolute;
    left: 3px;
    width: auto;
    color: #5f7f70;
}

.ruler-grip {
    position: absolute;
    left: 509px;
    top: 18px;
    width: 9px;
    height: 8px;
    background: repeating-linear-gradient(90deg, #c0c8c4 0 1px, transparent 1px 2px);
}

.playhead {
    position: absolute;
    right: -8px;
    bottom: -2px;
}

.snap {
    margin-left: 9px;
    width: 27px;
    height: 27px;
    display: flex;
    align-items: center;
    justify-content: center;
    background-color: #171717;
    border-radius: 3px;
}

.hscroll {
    position: relative;
    height: 13px;
    background-color: #333;
    margin-left: -9px;
}

.hs-grip {
    position: absolute;
    left: 553px;
    top: 4px;
    width: 32px;
    height: 6px;
    background: repeating-linear-gradient(90deg, #8a8a8a 0 2px, transparent 2px 3px);
}

.hs-arrow {
    position: absolute;
    right: 15px;
    top: 4px;
    border: 5px solid transparent;
    border-top: 5px solid #777;
    border-bottom: none;
}

.channels {
    position: relative;
    background-color: #111;
}

.channel {
    position: relative;
    height: 148px;
    display: flex;
}

.spec {
    position: relative;
    width: 1028px;
    height: 148px;
    background-color: #585858;
    border-top: 1px dashed #d0d0d0;
    border-bottom: 1px dashed #d0d0d0;
    border-right: 1px solid #df8e8e;
    overflow: hidden;
}

.band {
    position: absolute;
    top: 5px;
    bottom: 0;
    background: linear-gradient(rgba(96, 92, 105, .4) 0, rgba(100, 85, 120, .5) 18%, rgba(125, 65, 150, .7) 30%, rgba(170, 60, 150, .85) 42%, rgba(125, 65, 150, .75) 54%, rgba(100, 75, 130, .6) 72%, rgba(90, 80, 110, .25) 100%);
}

.flag {
    position: absolute;
    left: 38px;
    top: 51px;
    font: bold 21px "DejaVu Sans", sans-serif;
    line-height: 24px;
    white-space: nowrap;
    color: #ffcf7c;
    text-shadow: 0 0 1px #ff3f3f, 0 0 2px #ff3f3f, 0 0 3px #ee4660, 0 0 7px #b040a0;
    transform-origin: 0 0;
    transform: scaleX(1.622);
}

.handle {
    position: absolute;
    width: 6px;
    height: 6px;
    background-color: #d8d8d8;
}

.tl { left: 0; top: 0; }
.tr { right: 0; top: 0; }
.bl { left: 0; bottom: 0; }
.br { right: 0; bottom: 0; }

.freq {
    position: relative;
    flex: 1;
    background-color: #1f1f1f;
    font-size: 13px;
    color: #8a8a8a;
    overflow: hidden;
}

.f {
    position: absolute;
    left: 11px;
    line-height: 16px;
}

.f.low {
    color: #555;
}

.hz { top: 2px; }
.k10 { top: 23px; }
.k6 { top: 47px; }
.k4 { top: 69px; }
.k2 { top: 103px; }
.k1 { top: 124px; }
.k0 { top: 144px; }

.t {
    position: absolute;
    left: 1px;
    height: 1px;
    width: 6px;
    background-color: #a8a8a8;
}

.t1 { top: 30px; }
.t2 { top: 38px; width: 3px; }
.t3 { top: 54px; width: 3px; }
.t4 { top: 76px; width: 3px; }
.t5 { top: 110px; width: 3px; }
.t6 { top: 131px; }

.divider {
    height: 2px;
    width: 1028px;
    background: repeating-linear-gradient(90deg, #a8a8a8 0 2px, #6a6a6a 2px 3px);
}

.hud {
    position: absolute;
    left: 436px;
    top: 16px;
    width: 156px;
    height: 33px;
    display: flex;
    align-items: center;
    background-color: #2b2b2b;
}

.hud > svg:nth-of-type(1) {
    margin-left: 3px;
}

.hud > svg:nth-of-type(2) {
    margin-left: 5px;
}

.hud-grip {
    width: 11px;
    height: 33px;
    background: #444 repeating-linear-gradient(transparent 0 3px, #999 3px 4px, transparent 4px 6px) center / 3px 24px no-repeat;
}

.hud-db {
    margin-left: 6px;
    width: 60px;
    font-size: 13px;
    color: #888;
}

.hud-db b {
    color: #2d8ceb;
    font-weight: 400;
}

.hud-sep {
    width: 1px;
    height: 26px;
    background-color: #555;
    margin-right: 5px;
}

.transport {
    height: 47px;
    display: flex;
    align-items: center;
    padding-top: 1px;
}

.clock {
    margin: 9px 0 0 4px;
    width: 274px;
    font-size: 19.500px;
    color: #2d8ceb;
}

.transport-btns {
    display: grid;
    grid-template-columns: repeat(10, 37.400px);
    justify-items: center;
    align-items: center;
}

.t-loop {
    color: #b4b4b4;
}

.zoom-btns {
    margin-left: 126px;
    display: flex;
    color: #b4b4b4;
}

.zb {
    width: 37.400px;
    height: 24px;
    display: flex;
    align-items: center;
    justify-content: center;
}

.zb.col {
    flex-direction: column;
}

.zb.dim {
    color: #4a4a4a;
}

.status {
    margin-top: 6px;
    flex: 1;
    background-color: #232323;
}
```

FILE: script.js
```js
// trechos com som, em px a partir da esquerda da janela
const trechos = [
    [458, 463], [467, 479], [485, 503], [531, 550], [568, 583], [590, 606], [613, 619], [626, 645],
    [651, 654], [676, 690], [720, 738], [745, 763], [769, 785], [792, 804], [813, 820], [828, 831],
    [838, 842], [858, 865], [881, 892], [901, 917], [940, 956], [979, 996], [1007, 1020], [1026, 1040],
    [1047, 1052], [1061, 1066], [1071, 1076], [1092, 1099], [1118, 1125], [1135, 1150], [1161, 1172]
];
const pontos = [510, 522, 558, 613, 660, 678, 706, 745, 1017, 1049, 1064, 1073, 1096, 1121, 1139, 1166];
const inicio = 418;

function desenharOverview() {
    const svg = document.getElementById('overview');
    const ns = 'http://www.w3.org/2000/svg';
    const add = (x, w, y, h, cor) => {
        const r = document.createElementNS(ns, 'rect');
        r.setAttribute('x', x);
        r.setAttribute('y', y);
        r.setAttribute('width', w);
        r.setAttribute('height', h);
        r.setAttribute('fill', cor);
        svg.appendChild(r);
    };
    [4, 21].forEach(y => {
        trechos.forEach(t => {
            for (let x = t[0]; x < t[1]; x += 3) {
                add(x - inicio - 3, 2, y - 1, 3, '#a9b3b1');
            }
        });
        add(0, 1022, y, 1, '#5b6b68');
        pontos.forEach(p => add(p - inicio - 4, 3, y - 2, 5, '#5a6a67'));
    });
}

function desenharBandas() {
    document.querySelectorAll('[data-spec]').forEach(spec => {
        const flag = spec.querySelector('.flag');
        const base = document.createElement('i');
        base.className = 'band';
        base.style.left = '39px';
        base.style.width = '718px';
        base.style.opacity = 0.34;
        spec.prepend(base);
        trechos.forEach((t, i) => {
            const w = t[1] - t[0] + 2;
            for (let x = 0; x < w; x += 4) {
                const b = document.createElement('i');
                b.className = 'band';
                b.style.left = (t[0] - inicio - 1 + x) + 'px';
                b.style.width = '3px';
                b.style.opacity = 0.3 + ((i * 7 + x * 3) % 5) * 0.1;
                spec.insertBefore(b, flag);
            }
        });
    });
}

desenharOverview();
desenharBandas();
```
